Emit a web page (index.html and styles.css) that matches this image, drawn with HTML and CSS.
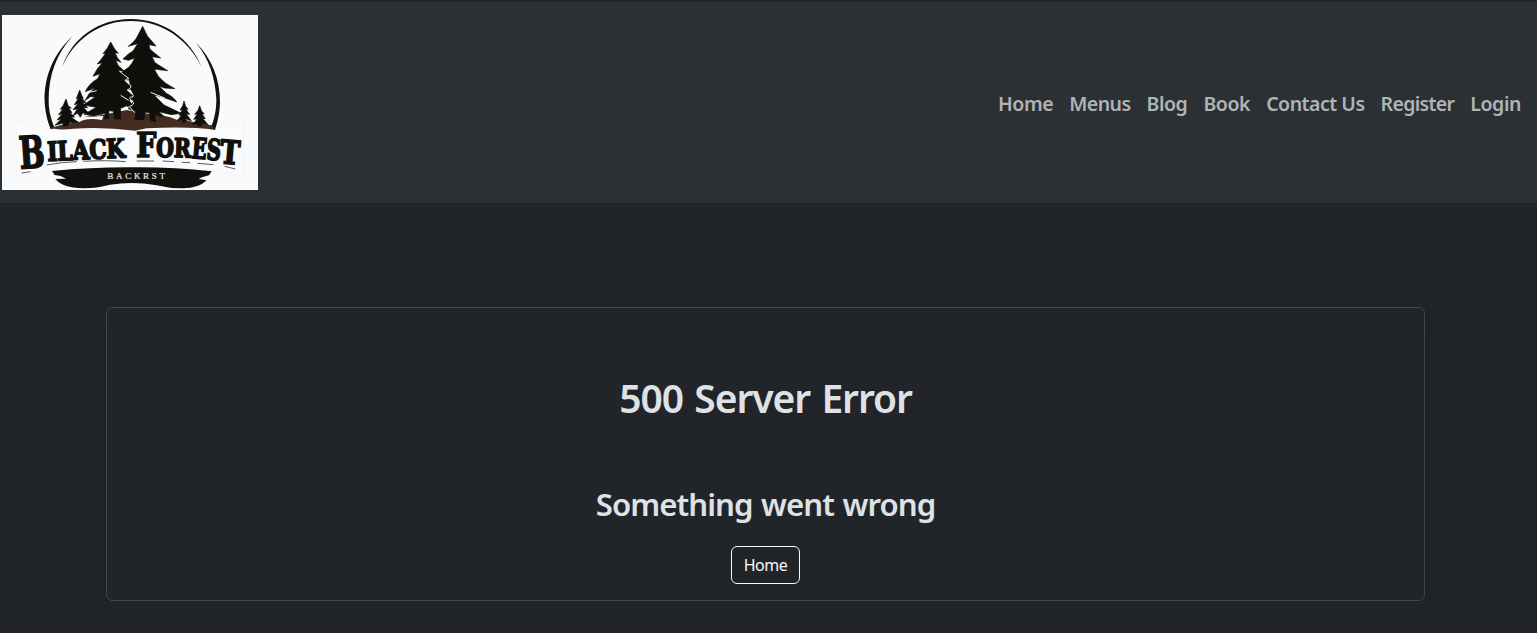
FILE: index.html
```html
<!DOCTYPE html>
<html lang="en">
<head>
<meta charset="utf-8">
<title>500 Server Error</title>
<link rel="stylesheet" href="styles.css">
</head>
<body>
<header class="navbar">
  <a class="brand" href="#">
    <svg class="logo" viewBox="6 45 768 525" role="img" aria-label="Bilack Forest">
      <rect x="6" y="45" width="768" height="525" fill="#f9fafc"/>
      <path d="M49 360L152 388H645L731 360V528L640 512H150L49 528Z" fill="#fafbfd" stroke="#f0f1f3" stroke-width="2"/>
      <g fill="#15110d">
        <path d="M217 109C155 166 131 240 134 307C136 340 143 365 152 388L164 384C151 352 146 330 146 300C146 225 169 163 217 109Z"/>
        <path d="M588 128C635 175 660 235 660 307C659 340 653 365 645 390L632 386C644 355 649 330 649 298C646 235 628 177 588 128Z"/>
        <path d="M187 200C215 117 292 57 392 57C492 57 570 116 605 201C563 117 487 63 392 63C300 63 222 118 187 200Z"/>
      </g>
      <path d="M152 385Q175 374 208 372Q240 344 290 348L380 330L470 346L540 354Q590 372 636 376L645 389Q560 378 440 385L405 392Q310 380 220 386Q180 391 152 385Z" fill="#452c20"/>
      <path d="M208 362Q235 344 270 350L310 348L306 360Q260 352 238 366ZM496 346L545 354L530 359Z" fill="#f9fafc"/>
      <g fill="#100f0c" stroke="#100f0c" stroke-width="2" stroke-linejoin="round">
        <path d="M332 126L344 147L355 160L345 158L352 173L363 187L347 181L355 197L373 213L356 212L386 240L371 239L397 266L380 270L402 292L388 301L402 325L379 318L362 325L361 352L366 357H344L340 334L327 332L325 356H314L316 340L282 348L252 343L289 322L250 315L286 291L271 290L255 302Q268 274 286 263L256 275Q267 250 293 236L300 221L279 229Q290 206 307 188L292 192Q305 177 317 160L309 161Q325 143 332 126Z"/>
        <path d="M428 79L442 108L468 138L447 134L450 148L482 174L456 170L465 188L503 212L485 210L463 208L475 229Q495 253 525 266L493 264L477 258L499 280Q523 292 530 306L484 290L462 285L492 315L544 340L514 344L477 335L494 351L463 345L467 365L451 361L448 338L435 337L432 359L404 359L408 335L385 326L401 303L383 290L400 282L389 262L389 242L367 225L359 221L386 202Q398 190 404 174L386 181L369 177Q384 161 399 153L413 131L385 139Q402 127 409 115Z"/>
        <path d="M198 297L205 318L214 324L207 325L216 338L209 337L224 351L213 351L235 367L211 367L202 378H190L188 370L165 376L184 357L171 360L187 341L175 344L189 327L181 328L190 316Z"/>
        <path d="M239 270L246 288L250 295L246 295L258 309L247 307L263 323L251 322L267 341L248 339L241 352L233 340L219 347L232 327L219 329L234 311L223 314L235 295L229 296Z"/>
        <path d="M552 303L557 319L564 328L558 328L569 343L559 342L574 362L557 357L555 367H548L546 358L533 362L544 345L537 346L547 329L540 330L548 318Z"/>
        <path d="M599 317L605 334L613 341L606 341L616 356L608 355L624 374L605 371L602 379H594L592 371L577 374L591 357L581 358L592 342L584 343L594 331Z"/>
      </g>
      <g fill="none" stroke="#f1f1ee" stroke-width="3">
        <path d="M358 213L371 224L387 236Q366 238 386 250Q402 261 382 270Q405 285 398 291Q380 290 397 304Q408 312 388 320L404 338"/>
        <path d="M362 286L386 301M268 277L290 272M452 277L494 294M469 210L490 217"/>
      </g>
      <g class="wordmark">
        <text x="61" y="506" textLength="76" lengthAdjust="spacingAndGlyphs" transform="rotate(-4 61 506)" font-size="133">B</text>
        <text x="143" y="483" textLength="234" lengthAdjust="spacingAndGlyphs" transform="rotate(-2.6 143 483)" font-size="79">ILACK</text>
        <text x="409" y="470" textLength="60" lengthAdjust="spacingAndGlyphs" font-size="101">F</text>
        <text x="468" y="470" textLength="104" lengthAdjust="spacingAndGlyphs" transform="rotate(1.5 468 470)" font-size="78">OR</text>
        <text x="573" y="474" textLength="88" lengthAdjust="spacingAndGlyphs" transform="rotate(5 573 474)" font-size="86">ES</text>
        <text x="658" y="489" textLength="59" lengthAdjust="spacingAndGlyphs" transform="rotate(5 658 489)" font-size="98">T</text>
      </g>
      <path d="M140 495Q185 486 230 485M250 484Q320 480 377 485M410 483L462 483M488 483L522 485M545 487L570 488M592 490L640 494M65 519L92 515M674 499L706 507" fill="none" stroke="#3b3732" stroke-width="2.5"/>
      <path d="M156 513Q280 501 400 502Q520 501 635 514L627 526L606 532L596 537L620 541Q596 565 550 565Q510 566 470 556Q400 543 330 554Q270 570 215 562Q180 555 166 537L198 536L182 528L164 525Z" fill="#11100d"/>
      <text class="tagline" x="322" y="538" textLength="173" font-size="27">BACKRST</text>
    </svg>
  </a>
  <nav class="nav">
    <a class="nav-link home" href="#">Home</a>
    <a class="nav-link menus" href="#">Menus</a>
    <a class="nav-link blog" href="#">Blog</a>
    <a class="nav-link book" href="#">Book</a>
    <a class="nav-link contact" href="#">Contact Us</a>
    <a class="nav-link register" href="#">Register</a>
    <a class="nav-link login" href="#">Login</a>
  </nav>
</header>
<main class="container">
  <section class="card">
    <h1 class="title">500 Server Error</h1>
    <h2 class="subtitle">Something went wrong</h2>
    <a class="button" href="#">Home</a>
  </section>
</main>
</body>
</html>
```
FILE: styles.css
```css
* { box-sizing: border-box; }
body {
  margin: 0;
  background: #212529;
  color: #dee2e6;
  font-family: "Noto Sans", "Open Sans", sans-serif;
  font-size: 16px;
  line-height: 1.5;
  overflow: hidden;
}
a { text-decoration: none; }
.navbar {
  display: flex;
  align-items: center;
  justify-content: space-between;
  height: 203px;
  padding: 0 8px 0 2px;
  border-top: 2px solid #212529;
  background: #2b3035;
}
.brand { display: block; }
.logo { display: block; width: 256px; height: 175px; }
.wordmark {
  font-family: "DejaVu Serif Condensed", "DejaVu Serif", serif;
  font-weight: 700;
  fill: #11100d;
  stroke: #11100d;
  stroke-width: 5px;
}
.tagline { font-family: "Liberation Serif", serif; fill: #e8e8e6; stroke: #e8e8e6; stroke-width: 0.6px; }
.nav { display: flex; padding-top: 3px; }
.nav-link {
  padding: 8px;
  color: #b1b3b5;
  font-size: 19.5px;
  font-weight: 600;
  line-height: 30px;
  letter-spacing: -0.42px;
  white-space: nowrap;
}
.menus { letter-spacing: -0.56px; }
.contact { letter-spacing: -0.48px; }
.register { letter-spacing: -0.67px; }
.container { padding: 104px 112px 0 106px; }
.card {
  display: flex;
  flex-direction: column;
  align-items: center;
  height: 294px;
  padding-top: 66px;
  border: 1px solid #424649;
  border-radius: 6px;
  box-shadow: 0 8px 16px rgba(0, 0, 0, 0.15);
}
.title { margin: 0; font-size: 39px; font-weight: 600; line-height: 48px; letter-spacing: -1.1px; word-spacing: 2.4px; }
.subtitle { margin: 63px 0 23px; font-size: 31.2px; font-weight: 600; line-height: 38px; letter-spacing: -0.95px; word-spacing: 1.4px; }
.button {
  width: 69px;
  height: 38px;
  border: 1px solid #f8f9fa;
  border-radius: 6px;
  color: #f8f9fa;
  line-height: 36px;
  text-align: center;
  letter-spacing: -0.5px;
}
```
